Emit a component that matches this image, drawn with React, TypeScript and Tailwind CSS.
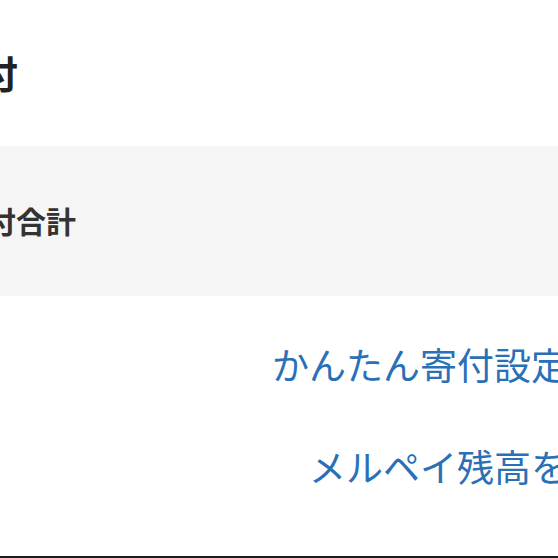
import React from "react";

const jp = { fontFamily: '"Noto Sans CJK JP", "Noto Sans", sans-serif' };

export default function App() {
  return (
    <div
      className="w-[558px] h-[558px] overflow-hidden bg-white flex flex-col"
      style={jp}
    >
      {/* section title */}
      <h1 className="mt-[53px] ml-[-58px] h-[38px] text-[38px] leading-[38px] font-bold text-[#222222] whitespace-nowrap">
        寄付
      </h1>

      {/* totals row */}
      <div className="mt-[55px] h-[150px] bg-[#f5f5f5] flex items-center">
        <span className="ml-[-44px] mt-[-2px] text-[30px] leading-[30px] font-bold text-[#333333] whitespace-nowrap">
          寄付合計
        </span>
      </div>

      {/* links */}
      <div className="mr-[-10px] flex flex-col items-end">
        <a className="mt-[50px] h-[37px] text-[37px] leading-[37px] text-[#2a70b6] whitespace-nowrap">
          かんたん寄付設定
        </a>
        <a className="mt-[65px] h-[37px] text-[37px] leading-[37px] text-[#2a70b6] whitespace-nowrap">
          メルペイ残高を
        </a>
      </div>

      <div className="mt-auto h-[2px] bg-[#1c1c1c]" />
    </div>
  );
}
